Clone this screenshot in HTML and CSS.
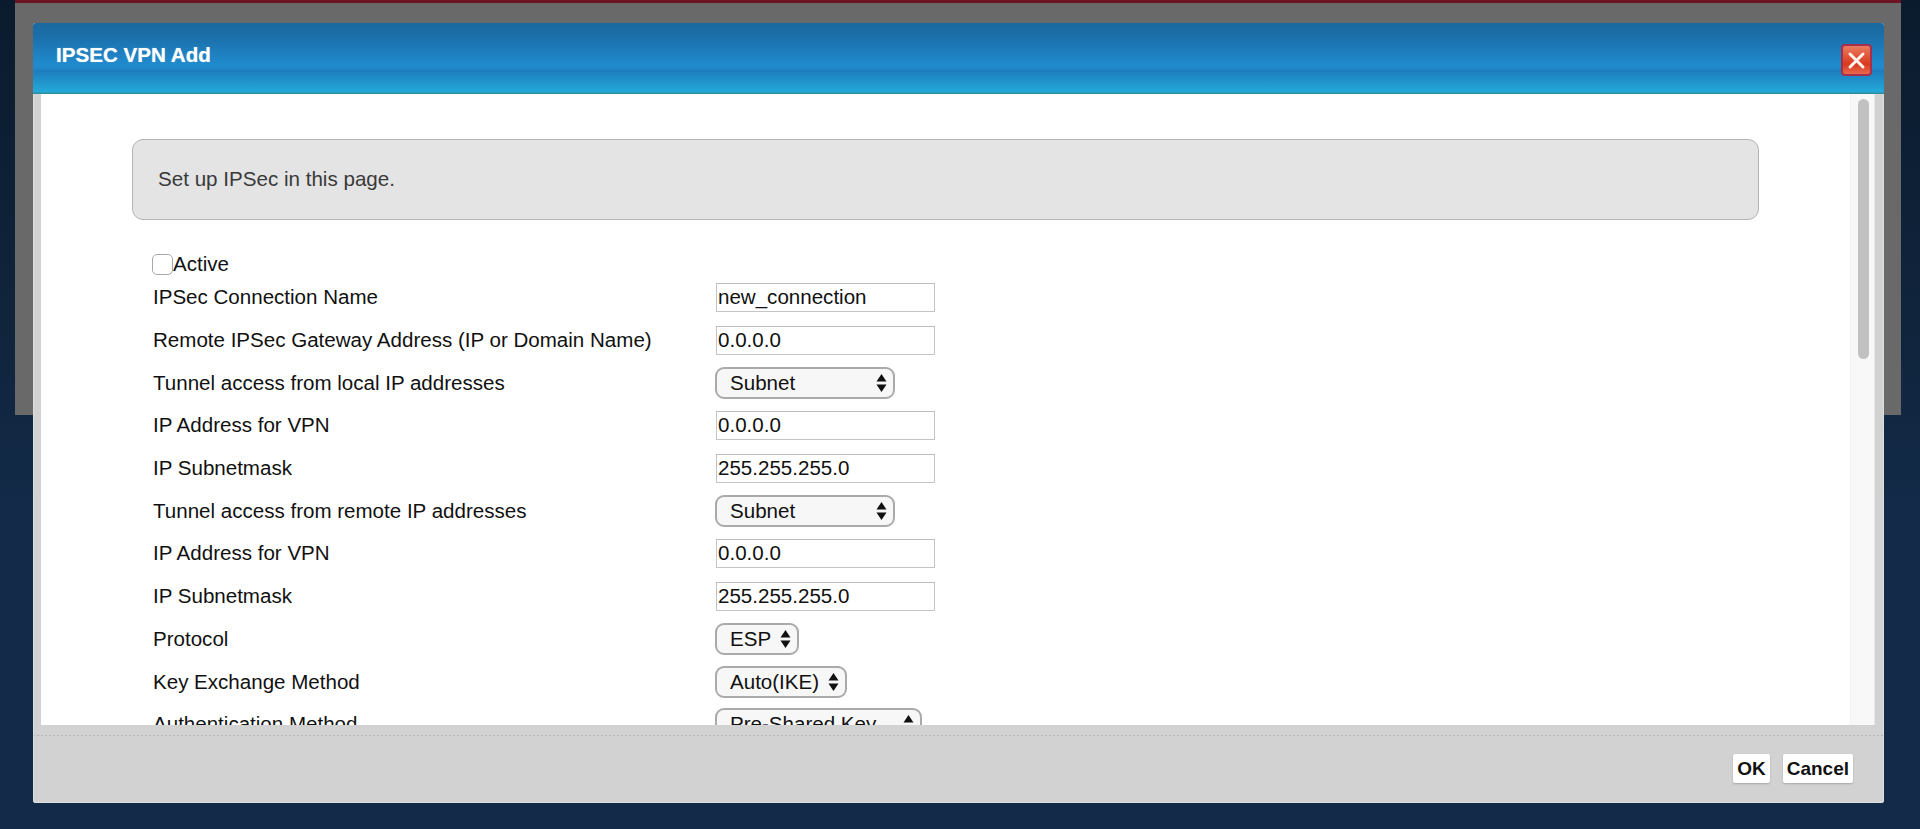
FILE: index.html
```html
<!DOCTYPE html>
<html lang="en">
<head>
<meta charset="utf-8">
<title>IPSEC VPN Add</title>
<link rel="stylesheet" href="styles.css">
</head>
<body>
<div class="page"><div class="page-topline"></div></div>
<div class="dialog">
  <header class="dialog-head">
    <h1 class="dialog-title">IPSEC VPN Add</h1>
    <button class="close" type="button" aria-label="Close">
      <svg width="21" height="21" viewBox="0 0 21 21"><path d="M4 4 17 17M17 4 4 17" stroke="#fff3ee" stroke-width="3" stroke-linecap="round" fill="none"/></svg>
    </button>
  </header>
  <div class="dialog-body">
    <div class="scroll">
      <div class="content">
        <div class="info">Set up IPSec in this page.</div>
        <div class="form">
          <label class="active"><span class="check"></span>Active</label>
          <div class="row"><span>IPSec Connection Name</span><input class="field" value="new_connection"></div>
          <div class="row"><span>Remote IPSec Gateway Address (IP or Domain Name)</span><input class="field" value="0.0.0.0"></div>
          <div class="row"><span>Tunnel access from local IP addresses</span><div class="select w-subnet">Subnet<svg class="arrows" width="11" height="18" viewBox="0 0 11 18"><path d="M5.500 0 10.500 7.500H.5ZM5.500 18 .5 10.500H10.500Z"/></svg></div></div>
          <div class="row"><span>IP Address for VPN</span><input class="field" value="0.0.0.0"></div>
          <div class="row"><span>IP Subnetmask</span><input class="field" value="255.255.255.0"></div>
          <div class="row"><span>Tunnel access from remote IP addresses</span><div class="select w-subnet">Subnet<svg class="arrows" width="11" height="18" viewBox="0 0 11 18"><path d="M5.500 0 10.500 7.500H.5ZM5.500 18 .5 10.500H10.500Z"/></svg></div></div>
          <div class="row"><span>IP Address for VPN</span><input class="field" value="0.0.0.0"></div>
          <div class="row"><span>IP Subnetmask</span><input class="field" value="255.255.255.0"></div>
          <div class="row"><span>Protocol</span><div class="select w-esp">ESP<svg class="arrows" width="11" height="18" viewBox="0 0 11 18"><path d="M5.500 0 10.500 7.500H.5ZM5.500 18 .5 10.500H10.500Z"/></svg></div></div>
          <div class="row"><span>Key Exchange Method</span><div class="select w-auto">Auto(IKE)<svg class="arrows" width="11" height="18" viewBox="0 0 11 18"><path d="M5.500 0 10.500 7.500H.5ZM5.500 18 .5 10.500H10.500Z"/></svg></div></div>
          <div class="row"><span>Authentication Method</span><div class="select w-psk">Pre-Shared Key<svg class="arrows" width="11" height="18" viewBox="0 0 11 18"><path d="M5.500 0 10.500 7.500H.5ZM5.500 18 .5 10.500H10.500Z"/></svg></div></div>
        </div>
      </div>
    </div>
    <div class="scrollbar"><div class="thumb"></div></div>
  </div>
  <footer class="dialog-foot">
    <button class="btn" type="button">OK</button>
    <button class="btn" type="button">Cancel</button>
  </footer>
</div>
</body>
</html>
```
FILE: styles.css
```css
* { box-sizing: border-box; }
html, body { height: 100%; }
body {
  margin: 0;
  overflow: hidden;
  background: linear-gradient(180deg, #0b1b2e 0, #10243c 330px, #132b49 520px, #132b49 100%);
  font-family: "Liberation Sans", Arial, sans-serif;
  color: #111;
}
.page {
  margin: 0 19px 0 15px;
  height: 415px;
  background: #696969;
}
.page-topline { height: 3px; background: #6c1522; }

.dialog {
  position: absolute;
  left: 33px;
  top: 23px;
  width: 1851px;
  height: 780px;
  display: flex;
  flex-direction: column;
  background: #d2d2d2;
  border-radius: 3px;
  outline: 1px dotted #e6eef0;
  outline-offset: -1px;
}
.dialog-head {
  position: relative;
  flex: 0 0 71px;
  display: flex;
  align-items: flex-start;
  padding: 20px 0 0 23px;
  border-radius: 3px 3px 0 0;
  background: linear-gradient(180deg, #1a6a9f 0, #1b6ea8 12px, #2089cc 40px, #208acd 44px, #1d7dbd 48px, #1f8ac6 54px, #25a9d8 69px, #2a8f9e 70px, #2a8f9e 71px);
}
.dialog-title {
  margin: 0;
  font-size: 20.6px;
  line-height: 24px;
  font-weight: 700;
  color: #fff;
  text-shadow: 0 0 1px rgba(255,255,255,.6);
}
.close {
  position: absolute;
  right: 12px;
  top: 21px;
  width: 31px;
  height: 32px;
  padding: 0;
  display: flex;
  align-items: center;
  justify-content: center;
  border: 2px solid #a72f4c;
  border-radius: 4px;
  background: linear-gradient(180deg, #e87d62 0, #e2573a 35%, #d93a1f 65%, #e9694d 100%);
}
.dialog-body {
  flex: 0 0 631px;
  display: flex;
  margin: 0 9px 0 8px;
  min-height: 0;
  background: #fff;
}
.scroll { flex: 1; min-width: 0; overflow: hidden; }
.content { padding: 45px 91px 0 91px; }
.info {
  height: 81px;
  padding: 0 0 2px 25px;
  display: flex;
  align-items: center;
  font-size: 20.6px;
  color: #3a3a3a;
  background: #e4e4e4;
  border: 1px solid #b4b4b4;
  border-radius: 11px;
}
.form { padding: 32px 0 0 21px; font-size: 20.55px; }
.active {
  display: flex;
  align-items: center;
  height: 24px;
  line-height: 24px;
}
.check {
  width: 21px;
  height: 21px;
  margin-left: -1px;
  background: #fff;
  border: 1px solid #a8a8a8;
  border-radius: 5px;
}
.row {
  display: grid;
  grid-template-columns: 563px 1fr;
  align-items: center;
  height: 42.7px;
}
.field {
  width: 219px;
  height: 29px;
  padding: 0 1px;
  font: inherit;
  color: #111;
  border: 1px solid #c4c4c4;
  border-top-color: #bdbdbd;
  border-radius: 0;
  background: #fff;
  outline: none;
}
.select {
  position: relative;
  height: 32px;
  margin-left: -1px;
  padding-left: 13px;
  display: flex;
  align-items: center;
  color: #111;
  border: 2px solid #aaa;
  border-radius: 9px;
  background: #f7f7f7;
}
.w-subnet { width: 180px; }
.w-esp { width: 84px; }
.w-auto { width: 132px; }
.w-psk { width: 207px; }
.arrows { position: absolute; right: 6px; top: 5px; fill: #111; }
.scrollbar {
  flex: 0 0 25px;
  padding: 5px 5px 0 7px;
  background: #f8f8f8;
  border-left: 1px solid #f1f1f1;
  border-right: 1px solid #e6e6e6;
}
.thumb { height: 260px; border-radius: 7px; background: #c1c1c1; }
.dialog-foot {
  flex: 1;
  display: flex;
  justify-content: flex-end;
  align-items: flex-start;
  gap: 13px;
  padding: 29px 31px 0 0;
  background: repeating-linear-gradient(90deg, #b5b5b5 0 2px, #d2d2d2 2px 4px) 0 10px / 100% 1px no-repeat, #d2d2d2;
  border-radius: 0 0 3px 3px;
}
.btn {
  height: 29px;
  padding: 0 4px;
  font: 700 19px "Liberation Sans", Arial, sans-serif;
  color: #111;
  border: 0;
  border-radius: 2px;
  background: #fff;
  box-shadow: 0 1px 2px rgba(0,0,0,.2);
}
```
